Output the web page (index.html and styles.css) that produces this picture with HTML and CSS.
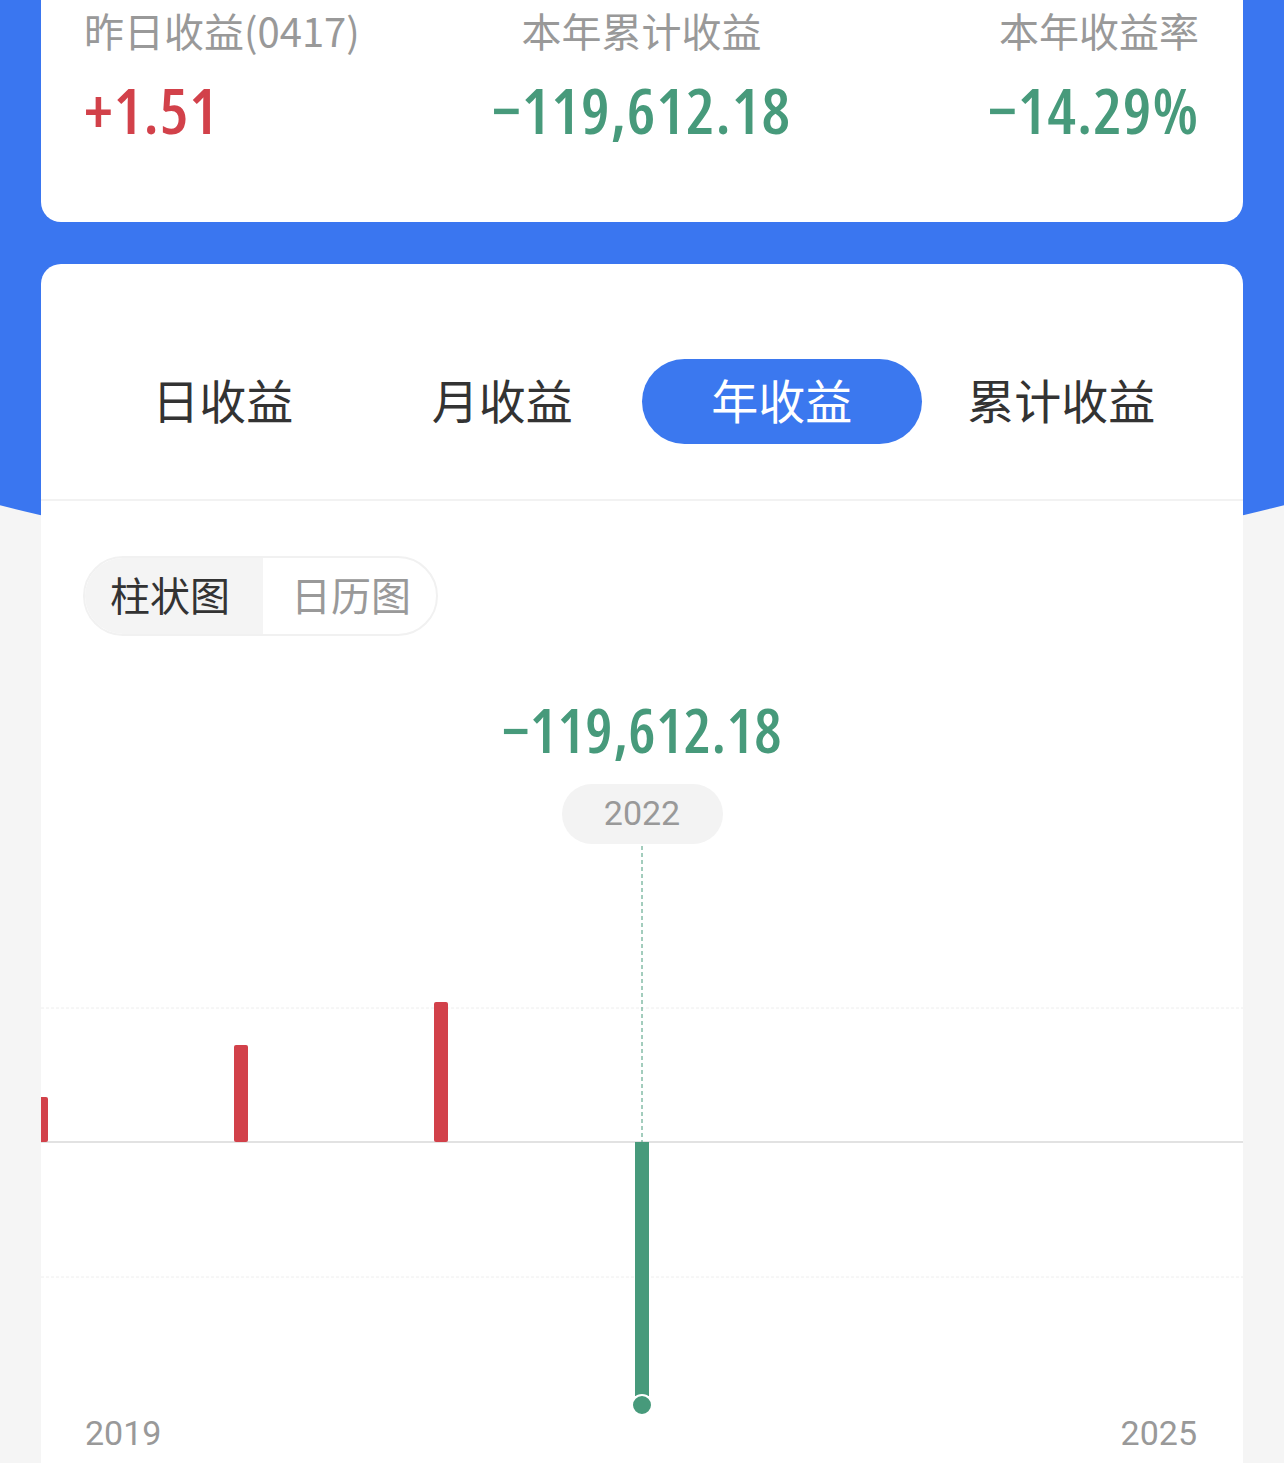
FILE: index.html
```html
<!DOCTYPE html>
<html>
    <head>
        <title>收益明细</title>
        <meta charset=utf8>
        <link rel="stylesheet" href="styles.css">
    </head>
    <body>
        <div class="page">
            <section class="card summary">
                <div class="stat">
                    <div class="stat-label">昨日收益(0417)</div>
                    <div class="stat-value up">+1.51</div>
                </div>
                <div class="stat stat-mid">
                    <div class="stat-label">本年累计收益</div>
                    <div class="stat-value down">−119,612.18</div>
                </div>
                <div class="stat stat-end">
                    <div class="stat-label">本年收益率</div>
                    <div class="stat-value down">−14.29%</div>
                </div>
            </section>

            <section class="card income">
                <nav class="tabs">
                    <span class="tab">日收益</span>
                    <span class="tab">月收益</span>
                    <span class="tab active">年收益</span>
                    <span class="tab">累计收益</span>
                </nav>
                <div class="panel">
                    <div class="switch">
                        <span class="seg active">柱状图</span>
                        <span class="seg">日历图</span>
                    </div>
                    <div class="chart">
                        <div class="chart-value">−119,612.18</div>
                        <div class="chart-tip">2022</div>
                        <svg class="bars" viewBox="0 0 1202 572" width="1202" height="572">
                            <line class="grid" x1="0" y1="164" x2="1202" y2="164" />
                            <line class="grid" x1="0" y1="433" x2="1202" y2="433" />
                            <line class="zero" x1="0" y1="298" x2="1202" y2="298" />
                            <line class="cursor" x1="601" y1="2" x2="601" y2="298" />
                            <rect class="bar-up" x="-7" y="253" width="14" height="45" rx="2" />
                            <rect class="bar-up" x="193" y="201" width="14" height="97" rx="2" />
                            <rect class="bar-up" x="393" y="158" width="14" height="140" rx="2" />
                            <rect class="bar-down" x="594" y="298" width="14" height="254" />
                            <circle class="dot" cx="601" cy="561" r="10" />
                        </svg>
                        <div class="axis">
                            <span>2019</span>
                            <span>2025</span>
                        </div>
                    </div>
                </div>
            </section>
        </div>
    </body>
</html>
```

FILE: styles.css
```css
html {
    font-family: "Noto Sans CJK SC", sans-serif;
    overflow: hidden;
}
body {
    margin: 0;
    padding: 0;
    background-color: #f5f5f5;
    overflow: hidden;
}
.page {
    display: flow-root;
    position: relative;
    padding: 0 41px;
    min-height: 1463px;
}
/* blue header with a wide curved bottom, under the cards */
.page::before {
    content: '';
    position: absolute;
    top: 0;
    left: -642px;
    width: 2568px;
    height: 581px;
    background-color: #3a76f0;
    border-radius: 0 0 50% 50% / 0 0 565px 565px;
}
.card {
    position: relative;
    background-color: white;
    border-radius: 20px;
}

/* summary */
.summary {
    margin-top: -30px;
    padding: 32px 44px 80px 43px;
    display: grid;
    grid-template-columns: 1fr 1fr 1fr;
}
.stat-mid {
    text-align: center;
}
.stat-end {
    text-align: right;
}
.stat-label {
    font-size: 40px;
    line-height: 56px;
    color: #999;
    white-space: nowrap;
}
.stat-value {
    margin-top: 20px;
    font-family: "Open Sans", sans-serif;
    font-stretch: condensed;
    font-weight: 600;
    font-size: 64px;
    line-height: 1;
    letter-spacing: 1px;
    white-space: nowrap;
}
.up {
    color: #d2414a;
}
.down {
    color: #479a7b;
}

/* income card */
.income {
    margin-top: 42px;
    min-height: 1300px;
}
.tabs {
    display: flex;
    padding: 95px 42px 55px;
    border-bottom: 2px solid #f2f2f2;
}
.tab {
    flex: 1;
    height: 85px;
    line-height: 80px;
    text-align: center;
    font-size: 47px;
    color: #333;
    border-radius: 43px;
}
.tab.active {
    background-color: #3b78ef;
    color: white;
}
.panel {
    padding-top: 55px;
}
.switch {
    display: inline-flex;
    margin-left: 42px;
    border: 2px solid #f1f1f1;
    border-radius: 40px;
    overflow: hidden;
}
.seg {
    height: 76px;
    line-height: 72px;
    padding: 0 25px 0 28px;
    font-size: 40px;
    color: #999;
}
.seg.active {
    padding: 0 33px 0 25px;
    background-color: #f4f4f4;
    color: #333;
}

/* chart */
.chart {
    display: flex;
    flex-direction: column;
    align-items: center;
}
.chart-value {
    margin-top: 63px;
    font-family: "Open Sans", sans-serif;
    font-stretch: condensed;
    font-weight: 600;
    font-size: 61px;
    line-height: 1;
    letter-spacing: 0.5px;
    color: #479a7b;
}
.chart-tip {
    margin-top: 24px;
    width: 161px;
    height: 60px;
    line-height: 58px;
    border-radius: 30px;
    background-color: #f3f3f3;
    text-align: center;
    font-family: Roboto, sans-serif;
    font-size: 34px;
    color: #999;
}
.bars {
    display: block;
}
.bars .grid {
    stroke: #eeeeee;
    stroke-width: 1;
    stroke-dasharray: 3 2;
}
.bars .zero {
    stroke: #e2e2e2;
    stroke-width: 2;
}
.bars .cursor {
    stroke: #479a7b;
    stroke-width: 1;
    stroke-dasharray: 4 3;
}
.bar-up {
    fill: #d2414a;
}
.bar-down {
    fill: #479a7b;
}
.dot {
    fill: #479a7b;
    stroke: white;
    stroke-width: 2;
}
.axis {
    align-self: stretch;
    display: flex;
    justify-content: space-between;
    margin-top: -3px;
    padding: 0 46px 0 44px;
    font-family: Roboto, sans-serif;
    font-size: 34px;
    line-height: 40px;
    color: #999;
}
```
